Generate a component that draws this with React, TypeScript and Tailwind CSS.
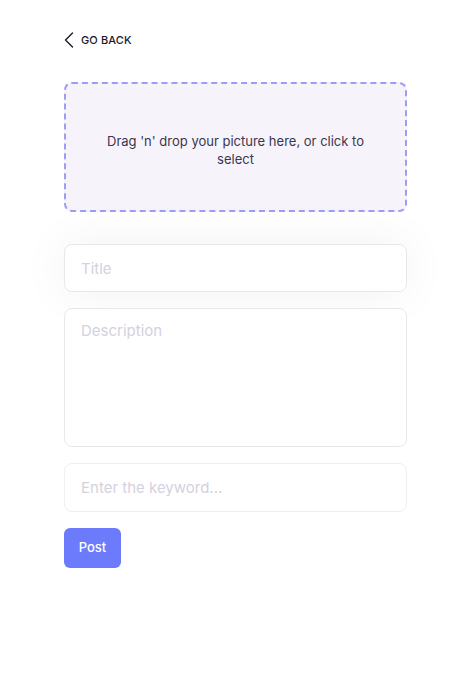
const fieldClass =
  "w-full rounded-lg border border-[#e9e7ee] bg-white px-4 text-[15px] text-[#2a2438] placeholder:text-[#d5d1de] outline-none";

const App = () => {
  return (
    <div className="min-h-[687px] bg-white font-['Inter',sans-serif]">
      <div className="px-16 pt-8">
        <button className="flex h-4 items-center gap-[7px] text-[11px] font-medium tracking-[0.01em] text-[#1d1829]">
          <svg width="10" height="16" viewBox="0 0 10 16" fill="none">
            <path
              d="M8.5 1 L1.5 8 L8.5 15"
              stroke="#1d1829"
              strokeWidth="1.4"
              strokeLinecap="round"
              strokeLinejoin="round"
            />
          </svg>
          GO BACK
        </button>

        <div className="mt-[34px] flex h-[130px] items-center justify-center rounded-lg border-2 border-dashed border-[#9d9df7] bg-[#f6f4fa] px-10 pt-[5px] text-center text-[13px] leading-[18px] text-[#3c3450]">
          Drag 'n' drop your picture here, or click to select
        </div>

        <div className="mt-[32px] flex flex-col gap-4">
          <input
            autoFocus
            placeholder="Title"
            className={`${fieldClass} h-[48px] shadow-[0_0_50px_rgba(0,0,0,0.06)] caret-[#2a2438]`}
          />
          <textarea
            placeholder="Description"
            className={`${fieldClass} h-[139px] resize-none py-3 leading-[20px]`}
          />
          <input
            placeholder="Enter the keyword..."
            className={`${fieldClass} h-[49px] border-[#efeef2]`}
          />
        </div>

        <button className="mt-4 h-10 w-[57px] rounded-md bg-[#6b7bfb] text-[13px] font-medium text-white">
          Post
        </button>
      </div>
    </div>
  );
};

export default App;
